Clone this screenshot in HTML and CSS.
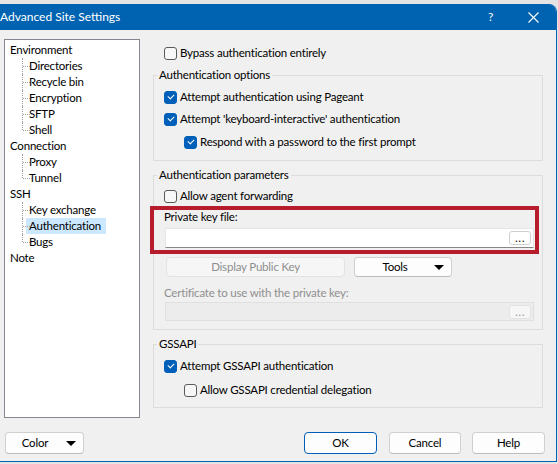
FILE: index.html
```html
<!DOCTYPE html>
<html>
<head>
<meta charset="utf-8">
<link rel="stylesheet" href="styles.css">
</head>
<body>
<div class="screen">
  <div class="window">
    <div class="titlebar">
      <span class="title">Advanced Site Settings</span>
      <span class="tb-help">?</span>
      <span class="tb-close"><svg width="11" height="11" viewBox="0 0 11 11"><path d="M0.5 0.5 L10.5 10.5 M10.5 0.5 L0.5 10.5" stroke="#fff" stroke-width="1.1" fill="none"/></svg></span>
    </div>
    <div class="body">
      <div class="main">
        <ul class="tree">
          <li class="node">Environment
            <ul class="children">
              <li>Directories</li>
              <li>Recycle bin</li>
              <li>Encryption</li>
              <li>SFTP</li>
              <li>Shell</li>
            </ul>
          </li>
          <li class="node">Connection
            <ul class="children">
              <li>Proxy</li>
              <li>Tunnel</li>
            </ul>
          </li>
          <li class="node">SSH
            <ul class="children">
              <li>Key exchange</li>
              <li><span class="selected">Authentication</span></li>
              <li>Bugs</li>
            </ul>
          </li>
          <li class="node">Note</li>
        </ul>
        <div class="pane">
          <label class="check top-check"><span class="box"></span>Bypass authentication entirely</label>

          <fieldset class="group g1">
            <legend>Authentication options</legend>
            <label class="check"><span class="box on"></span>Attempt authentication using Pageant</label>
            <label class="check"><span class="box on"></span>Attempt 'keyboard-interactive' authentication</label>
            <label class="check sub r3"><span class="box on"></span>Respond with a password to the first prompt</label>
          </fieldset>

          <fieldset class="group g2">
            <legend>Authentication parameters</legend>
            <label class="check"><span class="box"></span>Allow agent forwarding</label>
            <div class="keyblock">
              <div class="field-label">Private key file:</div>
              <div class="input"><span class="dots">...</span></div>
            </div>
            <div class="btnrow">
              <span class="btn disabled wide">Display Public Key</span>
              <span class="btn tools">Tools<span class="arrow"></span></span>
            </div>
            <div class="field-label dim cert">Certificate to use with the private key:</div>
            <div class="input off"><span class="dots">...</span></div>
          </fieldset>

          <fieldset class="group g3">
            <legend>GSSAPI</legend>
            <label class="check"><span class="box on"></span>Attempt GSSAPI authentication</label>
            <label class="check sub r2"><span class="box"></span>Allow GSSAPI credential delegation</label>
          </fieldset>
        </div>
      </div>
      <div class="footer">
        <span class="btn color">Color<span class="arrow"></span></span>
        <span class="btn ok">OK</span>
        <span class="btn cancel">Cancel</span>
        <span class="btn help">Help</span>
      </div>
    </div>
  </div>
</div>
</body>
</html>
```

FILE: styles.css
```css
* { box-sizing: border-box; }
html, body { margin: 0; padding: 0; }
body {
  width: 558px;
  height: 464px;
  overflow: hidden;
  background: #e4e4e4;
  font-family: Lato, "Noto Sans", sans-serif;
  font-size: 11.5px;
  letter-spacing: -0.2px;
  color: #000;
}
.screen { padding-top: 4px; }
.window {
  width: 557px;
  height: 458px;
  background: #f0f0f0;
  border-right: 1px solid #0063b1;
  border-bottom: 1px solid #0063b1;
  border-top-right-radius: 8px;
  overflow: hidden;
}
.titlebar {
  height: 26px;
  background: #0063b1;
  color: #fff;
  display: flex;
  align-items: center;
  font-size: 12px;
  letter-spacing: 0;
}
.title { margin-left: 0; flex: 1; line-height: 16px; }
.tb-help { width: 12px; margin-right: 28px; line-height: 16px; }
.tb-close { width: 11px; height: 11px; margin-right: 17px; display: flex; }

.body { height: 431px; }
.main { display: flex; padding-top: 9px; height: 388px; }

.tree {
  list-style: none;
  margin: 0 0 0 4px;
  padding: 2px 0 0 5px;
  width: 136px;
  height: 379px;
  background: #fff;
  border: 1px solid #828790;
}
.tree li { line-height: 16px; height: auto; }
.children { list-style: none; margin: 0; padding: 0 0 0 19px; }
.children li { position: relative; height: 16px; }
.children li::before {
  content: "";
  position: absolute;
  left: -7px;
  top: 0;
  height: 16px;
  border-left: 1px dotted #a0a0a0;
}
.children li:last-child::before { height: 8px; }
.children li::after {
  content: "";
  position: absolute;
  left: -6px;
  top: 8px;
  width: 9px;
  border-top: 1px dotted #a0a0a0;
}
.selected {
  display: inline-block;
  background: #cce8ff;
  margin-left: -3px;
  padding: 0 5px 0 3px;
}

.pane { margin-left: 13px; width: 390px; padding-top: 6px; }

.check { display: flex; align-items: center; height: 22px; line-height: 16px; }
.top-check { height: 16px; margin-left: 11px; }
.box {
  width: 13px; height: 13px;
  border: 1px solid #5a5a5a;
  border-radius: 3px;
  background: #f7f7f7;
  margin-right: 3px;
  flex: none;
  position: relative;
}
.box.on { background: #005fb8; border-color: #005fb8; }
.box.on::after {
  content: "";
  position: absolute;
  left: 3px; top: 2px;
  width: 5px; height: 3px;
  border-left: 1px solid #fff;
  border-bottom: 1px solid #fff;
  transform: rotate(-45deg);
}
.sub { margin-left: 20px; }
.r3 { margin-top: 1px; }
.r2 { margin-top: 2px; }

.group {
  margin: 6px 0 0 0;
  padding: 3px 8px 7px 10px;
  border: 1px solid #dcdcdc;
  min-width: 0;
}
.group legend {
  padding: 0 2px;
  margin-left: -7px;
  line-height: 16px;
}
.g2 { padding-top: 2px; padding-bottom: 8px; }
.g3 { padding-top: 3px; padding-bottom: 6px; }

.keyblock { position: relative; margin-top: 2px; }
.keyblock::after {
  content: "";
  position: absolute;
  left: -14px; right: -5px; top: -3px; bottom: -6px;
  border: 4px solid #b71c2c;
}
.field-label { line-height: 16px; height: 16px; }
.dim { color: #8f8f8f; }
.cert { margin-top: 8px; }

.input {
  margin: 3px 0 0 1px;
  height: 20px;
  background: #fff;
  border: 1px solid #e6e6e6;
  border-bottom-color: #868686;
  display: flex;
  justify-content: flex-end;
  align-items: center;
  padding-right: 2px;
}
.input.off {
  margin-top: 1px;
  height: 19px;
  background: #ececec;
  border: 1px solid #e0e0e0;
}
.dots {
  width: 22px; height: 14px;
  border: 1px solid #cfcfcf;
  border-radius: 3px;
  background: #fff;
  font-size: 12px;
  letter-spacing: 0.5px;
  line-height: 12px;
  text-align: center;
  color: #222;
}
.input.off .dots { background: #f6f6f6; border-color: #e2e2e2; color: #9a9a9a; }

.btnrow { display: flex; margin-top: 9px; padding-left: 2px; gap: 9px; }
.btn {
  display: flex;
  align-items: center;
  justify-content: center;
  height: 20px;
  background: #fdfdfd;
  border: 1px solid #d0d0d0;
  border-bottom-color: #bdbdbd;
  border-radius: 4px;
  line-height: 16px;
  position: relative;
}
.btn.disabled { background: #f6f6f6; border-color: #e3e3e3; color: #8f8f8f; }
.wide { width: 179px; }
.tools { width: 98px; padding-right: 16px; }
.arrow {
  position: absolute;
  right: 7px; top: 7px;
  width: 0; height: 0;
  border-left: 5px solid transparent;
  border-right: 5px solid transparent;
  border-top: 5px solid #000;
}

.footer { display: flex; margin-top: 14px; padding-left: 5px; }
.footer .btn { height: 22px; }
.color { width: 79px; padding-right: 19px; }
.color .arrow { top: 8px; }
.ok { width: 73px; margin-left: 220px; border: 1px solid #005fb8; }
.cancel { width: 72px; margin-left: 12px; }
.help { width: 73px; margin-left: 11px; }
```
